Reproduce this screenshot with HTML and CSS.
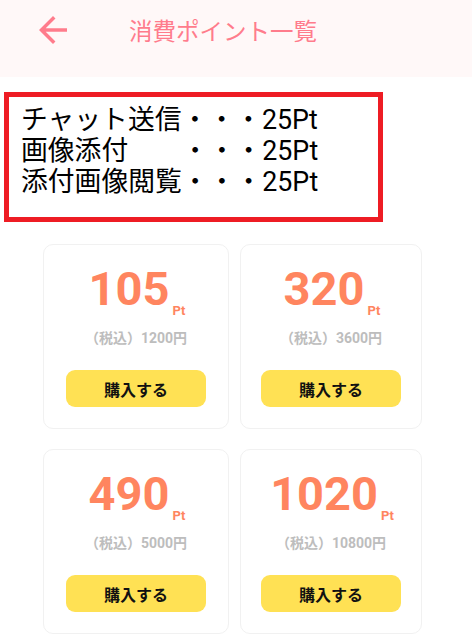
FILE: index.html
```html
<!DOCTYPE html>
<html lang="ja">
<head>
<meta charset="utf-8">
<title>消費ポイント一覧</title>
<link rel="stylesheet" href="styles.css">
</head>
<body>
<header class="header">
  <svg class="back" viewBox="0 0 24 24" width="42" height="42" aria-hidden="true">
    <path d="M20 11H7.83l5.59-5.59L12 4l-8 8 8 8 1.41-1.41L7.83 13H20v-2z" fill="#ff7c8c"/>
  </svg>
  <h1 class="title">消費ポイント一覧</h1>
</header>
<section class="notice">
  <p class="line">チャット送信・・・25Pt</p>
  <p class="line">画像添付　　・・・25Pt</p>
  <p class="line">添付画像閲覧・・・25Pt</p>
</section>
<main class="grid">
  <div class="card">
    <div class="amount">105<span class="unit">Pt</span></div>
    <div class="price">（税込）1200円</div>
    <button class="buy">購入する</button>
  </div>
  <div class="card">
    <div class="amount">320<span class="unit">Pt</span></div>
    <div class="price">（税込）3600円</div>
    <button class="buy">購入する</button>
  </div>
  <div class="card">
    <div class="amount">490<span class="unit">Pt</span></div>
    <div class="price">（税込）5000円</div>
    <button class="buy">購入する</button>
  </div>
  <div class="card">
    <div class="amount">1020<span class="unit">Pt</span></div>
    <div class="price">（税込）10800円</div>
    <button class="buy">購入する</button>
  </div>
</main>
</body>
</html>
```

FILE: styles.css
```css
html, body {
  margin: 0;
  padding: 0;
  background: #ffffff;
}
body {
  font-family: Roboto, "Noto Sans CJK JP", sans-serif;
  color: #111;
}
.header {
  height: 77px;
  background: #fff8f8;
  display: flex;
  align-items: flex-start;
}
.back {
  margin: 9px 0 0 32px;
  flex: none;
}
.title {
  margin: 15px 0 0 55px;
  font-size: 23.5px;
  line-height: 30px;
  font-weight: 400;
  color: #ff7c8c;
  font-family: "Noto Sans CJK JP", sans-serif;
}
.notice {
  box-sizing: border-box;
  margin: 15px 0 0 4px;
  width: 379px;
  height: 130px;
  border: 5px solid #ee1c24;
  padding: 8px 0 0 12px;
}
.line {
  margin: 0;
  font-size: 26.8px;
  line-height: 31px;
  white-space: pre;
  color: #000;
}
.grid {
  display: grid;
  grid-template-columns: 186px 182px;
  column-gap: 11px;
  row-gap: 20px;
  margin: 22px 0 0 43px;
}
.card {
  box-sizing: border-box;
  height: 185px;
  border: 1px solid #f1f1f1;
  border-radius: 10px;
  padding-top: 19px;
  display: flex;
  flex-direction: column;
  align-items: center;
}
.amount {
  font-size: 47px;
  line-height: 49px;
  font-weight: 700;
  color: #ff855f;
  padding-left: 2px;
}
.unit {
  font-size: 13px;
  line-height: 0;
  vertical-align: -10px;
  margin-left: 3px;
}
.price {
  margin-top: 15px;
  font-size: 14px;
  line-height: 20px;
  font-weight: 700;
  color: #bdbdbd;
}
.buy {
  margin-top: 22px;
  width: 140px;
  height: 37px;
  border: none;
  border-radius: 9px;
  background: #ffe154;
  font-family: Roboto, "Noto Sans CJK JP", sans-serif;
  font-size: 16px;
  font-weight: 700;
  color: #111;
  padding: 0;
}
```
